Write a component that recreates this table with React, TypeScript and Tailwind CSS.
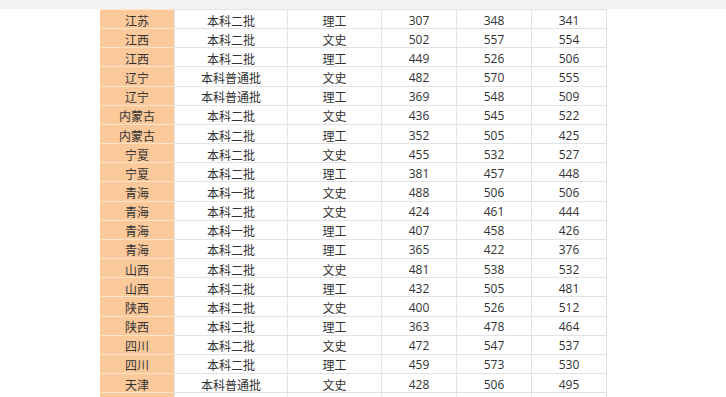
import type { FC } from 'react'

type Row = [string, string, string, number, number, number]

const rows: Row[] = [
  ['江苏', '本科二批', '理工', 307, 348, 341],
  ['江西', '本科二批', '文史', 502, 557, 554],
  ['江西', '本科二批', '理工', 449, 526, 506],
  ['辽宁', '本科普通批', '文史', 482, 570, 555],
  ['辽宁', '本科普通批', '理工', 369, 548, 509],
  ['内蒙古', '本科二批', '文史', 436, 545, 522],
  ['内蒙古', '本科二批', '理工', 352, 505, 425],
  ['宁夏', '本科二批', '文史', 455, 532, 527],
  ['宁夏', '本科二批', '理工', 381, 457, 448],
  ['青海', '本科一批', '文史', 488, 506, 506],
  ['青海', '本科二批', '文史', 424, 461, 444],
  ['青海', '本科一批', '理工', 407, 458, 426],
  ['青海', '本科二批', '理工', 365, 422, 376],
  ['山西', '本科二批', '文史', 481, 538, 532],
  ['山西', '本科二批', '理工', 432, 505, 481],
  ['陕西', '本科二批', '文史', 400, 526, 512],
  ['陕西', '本科二批', '理工', 363, 478, 464],
  ['四川', '本科二批', '文史', 472, 547, 537],
  ['四川', '本科二批', '理工', 459, 573, 530],
  ['天津', '本科普通批', '文史', 428, 506, 495],
  ['', '', '', 0, 0, 0],
]

const cell = 'flex items-center justify-center pt-[3px] border-r border-[#e3e3e3]'

const ScoreRow: FC<{ row: Row }> = ({ row }) => {
  const [prov, batch, kind, a, b, c] = row
  const empty = prov === ''
  return (
    <div className="flex h-[19.17px] shrink-0 border-b border-[#e3e3e3] text-[12px] text-[#333]">
      <div className="-mb-px flex w-[74px] items-center justify-center border-b border-[#fde3c9] bg-[#fcc99b] pt-[3px]">
        {prov}
      </div>
      <div className={`${cell} w-[114px] border-l border-[#e3e3e3]`}>{batch}</div>
      <div className={`${cell} w-[94px]`}>{kind}</div>
      <div className={`${cell} w-[75px] font-['Open_Sans',sans-serif]`}>{empty ? '' : a}</div>
      <div className={`${cell} w-[75px] font-['Open_Sans',sans-serif]`}>{empty ? '' : b}</div>
      <div className={`${cell} w-[75px] font-['Open_Sans',sans-serif]`}>{empty ? '' : c}</div>
    </div>
  )
}

export default function App() {
  return (
    <div className="flex h-[397px] w-[726px] flex-col overflow-hidden bg-white font-['Noto_Sans_CJK_SC',sans-serif]">
      {/* top strip */}
      <div className="h-[9px] shrink-0 bg-[#f2f2f2]" />

      {/* table */}
      <div className="ml-[100px] flex w-[507px] flex-col">
        <div className="flex h-px shrink-0">
          <div className="w-[74px] bg-[#fde3c9]" />
          <div className="flex-1 bg-[#e3e3e3]" />
        </div>
        {rows.map((r, i) => (
          <ScoreRow key={i} row={r} />
        ))}
      </div>
    </div>
  )
}
